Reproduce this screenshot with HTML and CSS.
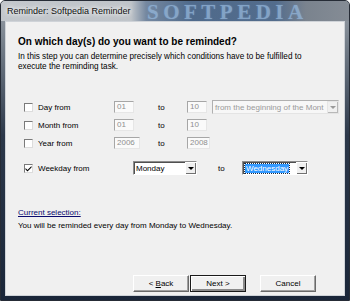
FILE: index.html
```html
<!DOCTYPE html>
<html lang="en">
<head>
    <meta charset="UTF-8">
    <title>Reminder: Softpedia Reminder</title>
    <link rel="stylesheet" href="styles.css">
</head>
<body>
    <div class="window">
        <div class="titlebar">
            <span class="title">Reminder: Softpedia Reminder</span>
            <span class="title-logo">SOFTPEDIA</span>
        </div>

        <div class="client">
            <h1 class="heading">On which day(s) do you want to be reminded?</h1>
            <p class="intro">In this step you can determine precisely which conditions have to be fulfilled to<br>execute the reminding task.</p>

            <div class="conditions">
                <div class="row">
                    <label class="check-label"><span class="checkbox"></span>Day from</label>
                    <span class="edit-cell"><span class="edit">01</span></span>
                    <span class="to">to</span>
                    <span class="edit">10</span>
                    <span class="combo combo-disabled">
                        <span class="combo-text">from the beginning of the Mont</span>
                        <span class="combo-button"><span class="arrow"></span></span>
                    </span>
                </div>
                <div class="row">
                    <label class="check-label"><span class="checkbox"></span>Month from</label>
                    <span class="edit-cell"><span class="edit">01</span></span>
                    <span class="to">to</span>
                    <span class="edit">10</span>
                </div>
                <div class="row">
                    <label class="check-label"><span class="checkbox"></span>Year from</label>
                    <span class="edit-cell"><span class="edit edit-year">2006</span></span>
                    <span class="to">to</span>
                    <span class="edit edit-year2">2008</span>
                </div>
                <div class="row row-weekday">
                    <label class="check-label check-label-wide">
                        <span class="checkbox">
                            <svg width="7" height="7" viewBox="0 0 7 7"><path d="M0.5 3 L2.5 5 L6.5 1 L6.5 2.5 L2.5 6.5 L0.5 4.5 Z" fill="#000"/></svg>
                        </span>Weekday from
                    </label>
                    <span class="combo combo-day">
                        <span class="combo-text">Monday</span>
                        <span class="combo-button"><span class="arrow"></span></span>
                    </span>
                    <span class="to to-weekday">to</span>
                    <span class="combo combo-day combo-day2">
                        <span class="combo-text"><span class="selected">Wednesday</span></span>
                        <span class="combo-button"><span class="arrow"></span></span>
                    </span>
                </div>
            </div>

            <p class="current">Current selection:</p>
            <p class="summary">You will be reminded every day from Monday to Wednesday.</p>

            <div class="buttons">
                <button class="btn"><span>&lt; <u>B</u>ack</span></button>
                <button class="btn btn-default"><span>Next &gt;</span></button>
                <button class="btn btn-cancel"><span>Cancel</span></button>
            </div>
        </div>
    </div>
</body>
</html>
```

FILE: styles.css
```css
/* Page */
body {
    margin: 0;
    font-family: "Liberation Sans", Arial, sans-serif;
    font-size: 8px;
    color: #000;
}

/* Window frame */
.window {
    width: 350px;
    height: 301px;
    box-sizing: border-box;
    display: flex;
    flex-direction: column;
    border: 1px solid #262c36;
    border-radius: 5px 5px 0 0;
    background: linear-gradient(to bottom, #9aa1a9 0, #6c7682 18%, #2c384a 45%, #1a2639 100%);
}

/* Title bar */
.titlebar {
    position: relative;
    height: 20px;
    display: flex;
    align-items: center;
    padding-left: 6px;
    background: linear-gradient(90deg, #c3c7cc 0, #bfc4c9 130px, #7588a0 145px, #4f6a8b 190px, #536c8c 275px, #7a838e 305px, #858c95 100%);
    border-radius: 4px 4px 0 0;
}

.title {
    position: relative;
    z-index: 1;
    font-size: 9px;
    color: #111;
    text-shadow: 0 0 4px #fff, 0 0 6px #fff;
}

.title-logo {
    position: absolute;
    left: 146px;
    top: 1px;
    font-family: "Liberation Serif", serif;
    font-weight: bold;
    font-size: 21px;
    line-height: 20px;
    letter-spacing: 4.5px;
    color: #94b6da;
    opacity: 0.75;
    text-shadow: 0 0 2px #6f93bd;
}

/* Client area */
.client {
    flex: 1;
    margin: 0 4px 4px 4px;
    display: flex;
    flex-direction: column;
    padding: 14px 0 3px 12px;
    background-color: #f0f0f0;
    border: 1px solid #cfd3d8;
}

.heading {
    margin: 0;
    font-size: 10px;
    line-height: 12px;
    font-weight: bold;
}

.intro {
    margin: 4px 0 0;
    font-size: 8.2px;
    line-height: 10px;
}

/* Condition rows */
.conditions {
    margin-top: 26px;
}

.row {
    height: 18px;
    display: flex;
    align-items: center;
    padding-left: 6px;
}

.row-weekday {
    margin-top: 7px;
}

.check-label {
    width: 90px;
    display: flex;
    align-items: center;
}

.check-label-wide {
    width: 109px;
}

.checkbox {
    width: 7px;
    height: 7px;
    margin-right: 5px;
    display: flex;
    align-items: center;
    justify-content: center;
    background-color: #fff;
    border: 1px solid;
    border-color: #7a7a7a #dcdcdc #dcdcdc #7a7a7a;
}

.edit-cell {
    width: 44px;
}

.edit {
    display: inline-block;
    width: 16px;
    height: 10px;
    line-height: 10px;
    padding-left: 2px;
    color: #8f8f8f;
    background-color: #fafafa;
    border: 1px solid;
    border-color: #a6a6a6 #e6e6e6 #e6e6e6 #a6a6a6;
}

.edit-year {
    width: 22px;
}

.edit-year2 {
    width: 19px;
}

.to {
    width: 29px;
}

.to-weekday {
    width: 24px;
    margin-left: 21px;
}

/* Combo boxes */
.combo {
    height: 12px;
    display: flex;
    align-items: stretch;
    background-color: #fff;
    border: 1px solid;
    border-color: #8c8c8c #fff #fff #8c8c8c;
    box-shadow: inset 1px 1px 0 #505050;
}

.combo-disabled {
    width: 125px;
    margin-left: 5px;
    color: #9a9a9a;
    background-color: #f7f7f7;
    border-color: #b0b0b0 #e4e4e4 #e4e4e4 #b0b0b0;
    box-shadow: none;
}

.combo-day {
    width: 62px;
    height: 12px;
}

.combo-day2 {
    width: 64px;
}

.combo-text {
    flex: 1;
    display: flex;
    align-items: center;
    padding-left: 2px;
    white-space: nowrap;
    overflow: hidden;
}

.selected {
    padding: 0 1px;
    color: #fff;
    background-color: #3399ff;
    outline: 1px dotted #1a2a40;
}

.combo-button {
    width: 10px;
    display: flex;
    align-items: center;
    justify-content: center;
    background-color: #f0f0f0;
    border-left: 1px solid #fff;
    border-top: 1px solid #fff;
    box-shadow: inset -1px -1px 0 #707070;
}

.combo-disabled .combo-button {
    border-color: #e6e6e6;
    box-shadow: inset -1px -1px 0 #b8b8b8;
}

.arrow {
    width: 0;
    height: 0;
    border-left: 3px solid transparent;
    border-right: 3px solid transparent;
    border-top: 3px solid #000;
}

.combo-disabled .arrow {
    border-top-color: #9a9a9a;
}

/* Current selection */
.current {
    margin: 31px 0 0;
    line-height: 10px;
    color: #0a0a6e;
    text-decoration: underline;
}

.summary {
    margin: 3px 0 0;
    line-height: 10px;
}

/* Wizard buttons */
.buttons {
    margin-top: auto;
    margin-left: 115px;
    display: flex;
}

.btn {
    width: 56px;
    height: 17px;
    padding: 0;
    font-family: "Liberation Sans", Arial, sans-serif;
    font-size: 8px;
    color: #000;
    background-color: #f0f0f0;
    border: 1px solid;
    border-color: #fff #6a6a6a #6a6a6a #fff;
    box-shadow: inset -1px -1px 0 #a0a0a0;
}

.btn u {
    text-decoration: underline;
}

.btn-default {
    margin-left: 1px;
    border: 1px solid #1a1a1a;
    box-shadow: inset 1px 1px 0 #fff, inset -2px -2px 0 #8a8a8a;
}

.btn-cancel {
    margin-left: 14px;
}
```
